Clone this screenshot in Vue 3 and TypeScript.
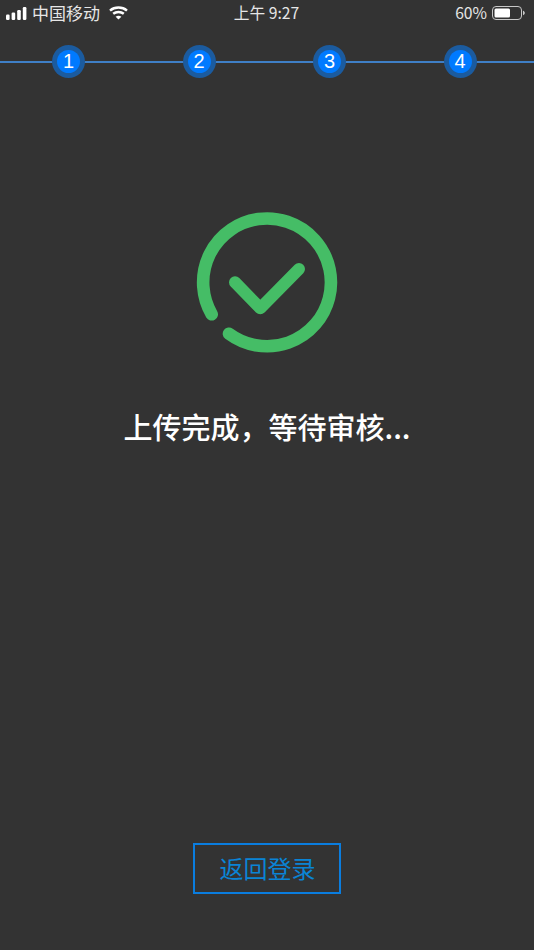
<script setup lang="ts">
const steps: number[] = [1, 2, 3, 4]
</script>

<template>
  <div class="page">
    <header class="status">
      <div class="status-side">
        <svg class="signal" width="21" height="13" viewBox="0 0 21 13">
          <rect x="0" y="7.5" width="3.6" height="5.5" rx="1.2" fill="#fff" />
          <rect x="5.6" y="5.5" width="3.6" height="7.5" rx="1.2" fill="#fff" />
          <rect x="11.2" y="3" width="3.6" height="10" rx="1.2" fill="#fff" />
          <rect x="16.8" y="0" width="3.6" height="13" rx="1.2" fill="#fff" />
        </svg>
        <span class="carrier">中国移动</span>
        <svg class="wifi" width="19" height="14" viewBox="0 0 19 14" fill="none" stroke="#fff" stroke-width="2.5">
          <path d="M1 4.6C5.8 .6 13.2 .6 18 4.6" />
          <path d="M4.2 7.8C7.2 5.4 11.8 5.4 14.8 7.8" />
          <path d="M9.5 13.6L6.6 10.7C8.3 9.4 10.7 9.4 12.4 10.7Z" fill="#fff" stroke="none" />
        </svg>
      </div>
      <span class="time">上午 9:27</span>
      <div class="status-side right">
        <span class="percent">60%</span>
        <svg class="battery" width="33" height="14" viewBox="0 0 33 14">
          <rect x="0.5" y="0.5" width="29" height="13" rx="3.5" fill="none" stroke="#c8c8c8" />
          <rect x="2.5" y="2.5" width="15.5" height="9" rx="1.5" fill="#fff" />
          <path d="M31 4.8C32.2 5.2 32.8 6 32.8 7S32.2 8.8 31 9.2Z" fill="#c8c8c8" />
        </svg>
      </div>
    </header>

    <div class="steps">
      <div v-for="step in steps" :key="step" class="step">
        <span class="step-inner">{{ step }}</span>
      </div>
    </div>

    <main class="result">
      <svg class="done-icon" width="160" height="160" viewBox="187 202 160 160" fill="none" stroke="#45bd66" stroke-linecap="round" stroke-linejoin="round">
        <path stroke-width="12.6" d="M211.7 314.3A63.9 63.9 0 1 1 229 333.7" />
        <path stroke-width="12" d="M235 282.3L260.3 308.3L299 269" />
      </svg>
      <h1 class="message">上传完成，等待审核...</h1>
    </main>

    <button class="back" type="button">返回登录</button>
  </div>
</template>

<style>
html, body { margin: 0; background: #333; }
</style>

<style scoped>
.page {
  width: 534px;
  height: 950px;
  overflow: hidden;
  background: #333333;
  display: flex;
  flex-direction: column;
  align-items: center;
  font-family: "Noto Sans CJK SC", "Noto Sans", sans-serif;
}
.status {
  width: 100%;
  height: 26px;
  box-sizing: border-box;
  padding: 0 9px 0 6px;
  display: grid;
  grid-template-columns: 1fr auto 1fr;
  align-items: center;
  color: #e6e6e6;
  font-size: 17px;
  line-height: 26px;
}
.status-side { display: flex; align-items: center; }
.status-side.right { justify-content: flex-end; }
.signal { margin-right: 5px; }
.wifi { margin-left: 9px; margin-top: -1px; }
.time { font-size: 15.7px; margin-left: 2px; }
.percent { font-size: 15.7px; margin-right: 5px; }
.steps {
  align-self: stretch;
  margin-top: 19px;
  height: 33px;
  padding-left: 52px;
  display: flex;
  gap: 97.5px;
  background: linear-gradient(#3f7fc6, #3f7fc6) 0 16px / 100% 2px no-repeat;
}
.step {
  width: 33px;
  height: 33px;
  flex: none;
  border-radius: 50%;
  background: #1b5b9f;
  display: flex;
  align-items: center;
  justify-content: center;
}
.step-inner {
  width: 23px;
  height: 23px;
  border-radius: 50%;
  background: #007aff;
  color: #fff;
  font-family: "Liberation Sans", Arial, sans-serif;
  font-size: 20px;
  line-height: 23px;
  text-align: center;
}
.result {
  display: flex;
  flex-direction: column;
  align-items: center;
}
.done-icon { margin-top: 124px; display: block; }
.message {
  margin: 42px 0 0;
  color: #fff;
  font-size: 29px;
  line-height: 44px;
  font-weight: 500;
  white-space: nowrap;
}
.back {
  margin-top: auto;
  margin-bottom: 56px;
  width: 148px;
  height: 51px;
  box-sizing: border-box;
  border: 2px solid #0a7ddf;
  background: transparent;
  color: #0a84d6;
  font-family: inherit;
  font-size: 24px;
  padding: 0 0 2px 1px;
}
</style>
